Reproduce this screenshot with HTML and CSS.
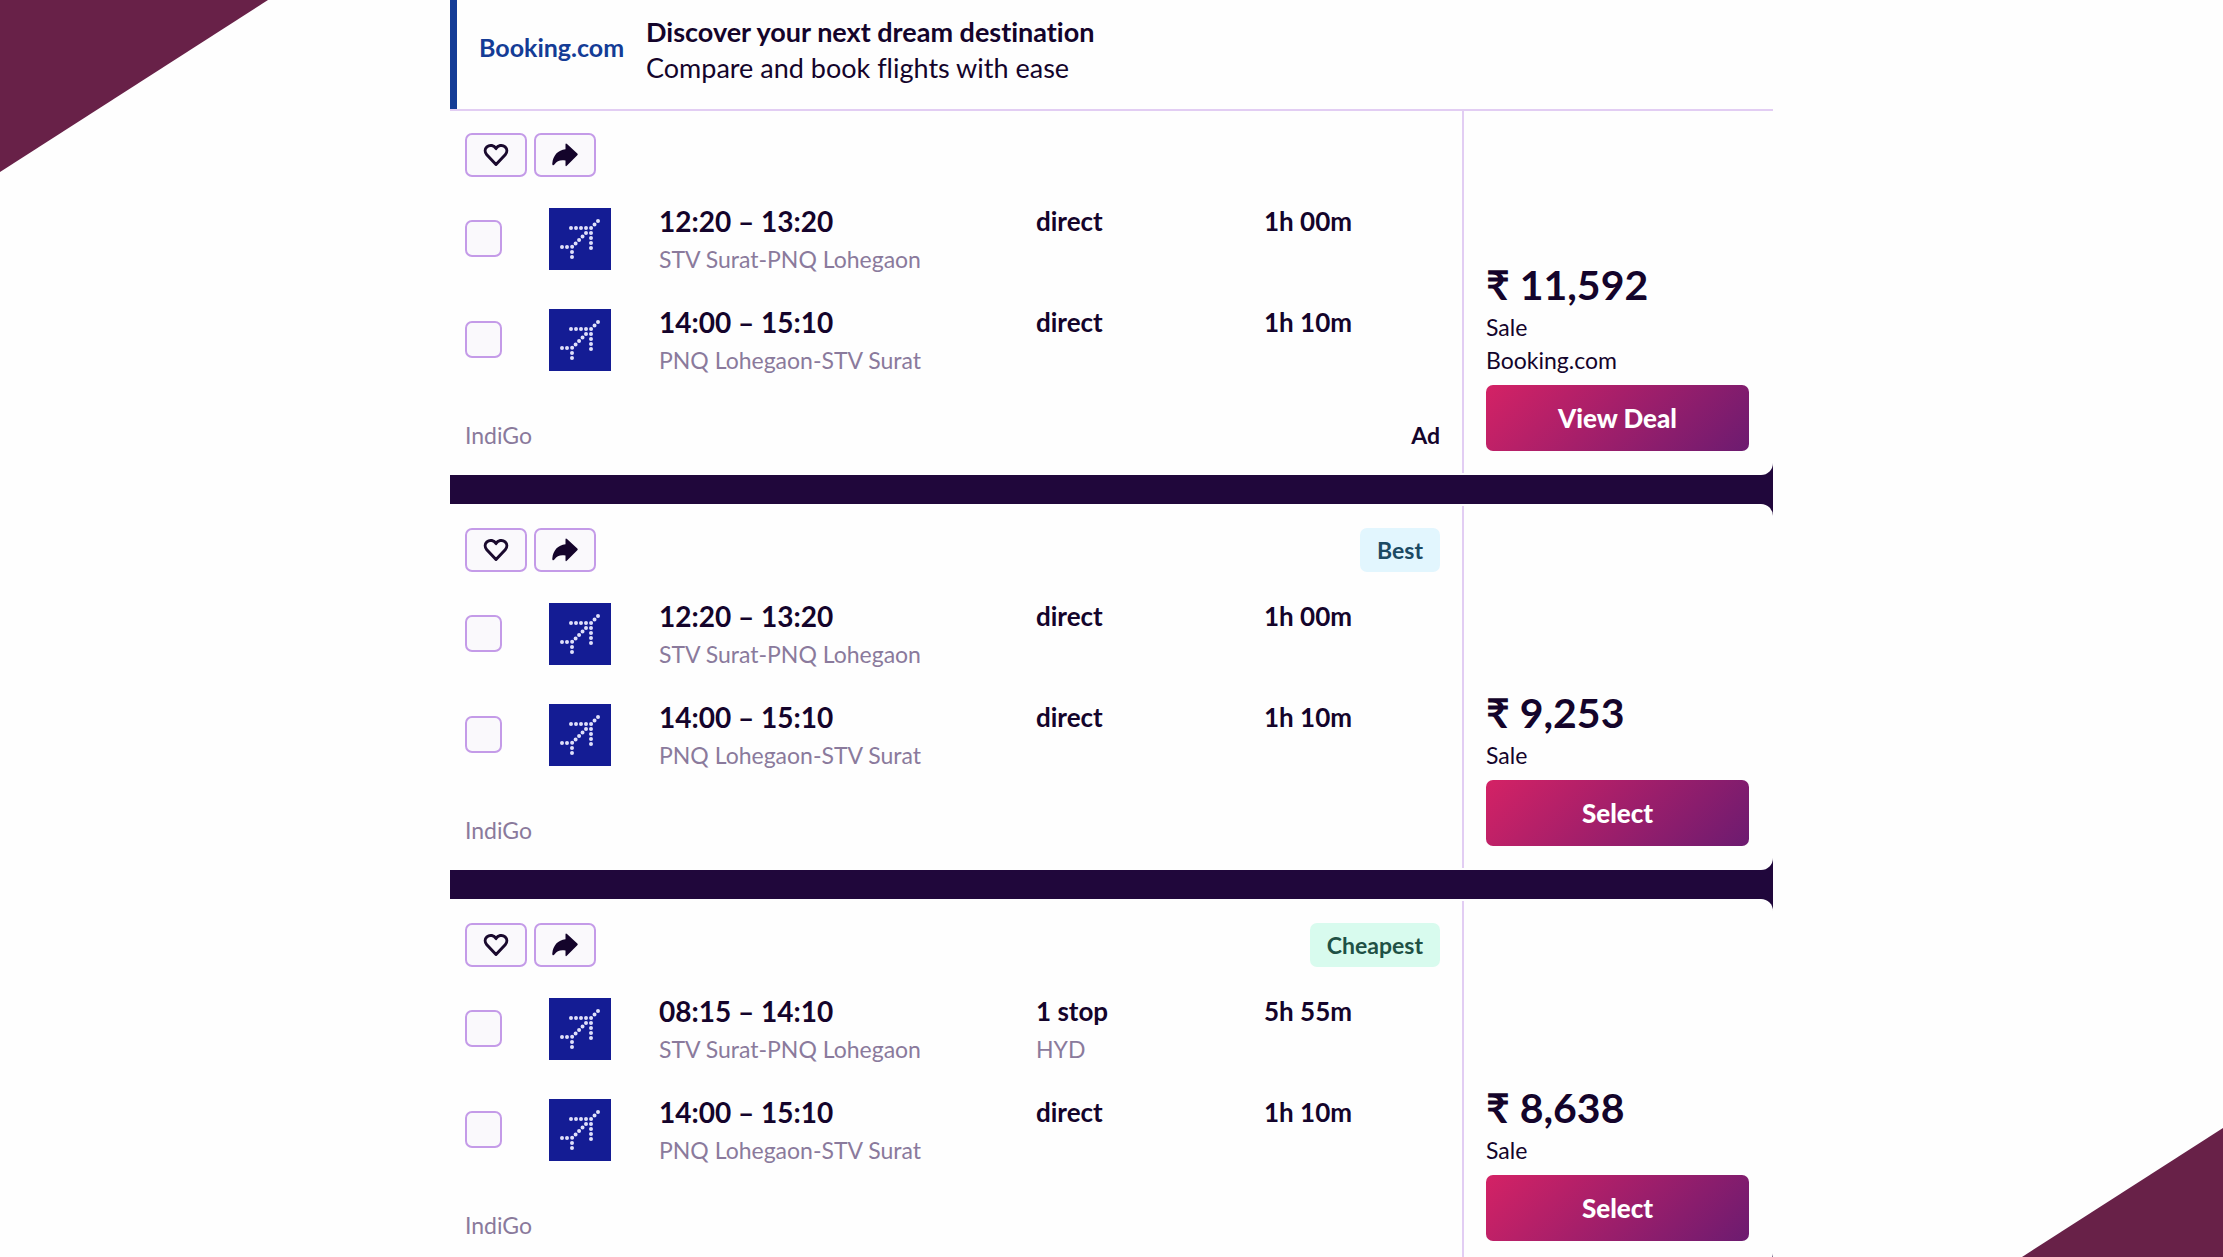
FILE: index.html
```html
<!DOCTYPE html>
<html lang="en">
<head>
    <meta charset="UTF-8">
    <meta name="viewport" content="width=device-width, initial-scale=1.0">
    <title>Flight Results</title>
    <link rel="stylesheet" href="styles.css">
</head>
<body>

    <!-- Shared icons -->
    <svg class="icon-defs" aria-hidden="true">
        <symbol id="icon-heart" viewBox="0 0 26 24">
            <path d="M13 21.5 3.8 11.8C1.6 9.2 1.7 5.8 3.9 3.8 6.8 1.4 11 2.2 13 5.6 15 2.2 19.2 1.4 22.1 3.8 24.3 5.8 24.4 9.200 22.2 11.800Z" fill="none" stroke="#1a0a2e" stroke-width="3" stroke-linejoin="round"></path>
        </symbol>
        <symbol id="icon-share" viewBox="0 0 26 24">
            <path d="M13.500 1.500Q13.500 0 15 1L25.300 10.400Q26.200 11.300 25.300 12.200L15 22.600Q13.500 24 13.500 22V17.500C8.500 16.500 5 17.800 2.600 21.200 1.600 22.800 0.200 22.500 0.300 20.500 1 12.500 6 7 13.500 6.300Z" fill="#14042b"></path>
        </symbol>
        <symbol id="logo-indigo" viewBox="0 0 62 62">
            <rect width="62" height="62" fill="#141c94"></rect>
            <g fill="none" stroke="#dfe0fa" stroke-width="4" stroke-linecap="round">
                <path d="M22 20H42" stroke-dasharray="0 5"></path>
                <path d="M42 25V41" stroke-dasharray="0 5"></path>
                <path d="M49 13 42 20" stroke-dasharray="0 4.9"></path>
                <path d="M37 25 23 39" stroke-dasharray="0 4.9"></path>
                <path d="M13 39H23" stroke-dasharray="0 5"></path>
                <path d="M23 44V50" stroke-dasharray="0 5"></path>
            </g>
        </symbol>
    </svg>

    <div class="page">
        <div class="corner corner-top"></div>
        <div class="corner corner-bottom"></div>

        <main class="results">
            <header class="banner">
                <span class="banner-logo">Booking.com</span>
                <div class="banner-text">
                    <strong>Discover your next dream destination</strong>
                    <span>Compare and book flights with ease</span>
                </div>
            </header>

            <article class="card card-sponsored">
                <div class="card-main">
                    <div class="card-top">
                        <button class="icon-button" aria-label="Save"><svg><use href="#icon-heart"></use></svg></button>
                        <button class="icon-button" aria-label="Share"><svg><use href="#icon-share"></use></svg></button>
                    </div>
                    <div class="leg">
                        <input type="checkbox" class="leg-check" aria-label="12:20 – 13:20">
                        <svg class="leg-logo"><use href="#logo-indigo"></use></svg>
                        <div class="leg-info"><div class="time">12:20 – 13:20</div><div class="sub">STV Surat-PNQ Lohegaon</div></div>
                        <div class="leg-info"><div class="detail">direct</div></div>
                        <div class="leg-info"><div class="detail">1h 00m</div></div>
                    </div>
                    <div class="leg">
                        <input type="checkbox" class="leg-check" aria-label="14:00 – 15:10">
                        <svg class="leg-logo"><use href="#logo-indigo"></use></svg>
                        <div class="leg-info"><div class="time">14:00 – 15:10</div><div class="sub">PNQ Lohegaon-STV Surat</div></div>
                        <div class="leg-info"><div class="detail">direct</div></div>
                        <div class="leg-info"><div class="detail">1h 10m</div></div>
                    </div>
                    <div class="card-bottom">
                        <span class="sub">IndiGo</span>
                        <span class="ad">Ad</span>
                    </div>
                </div>
                <div class="card-price">
                    <div class="price">₹ 11,592</div>
                    <div class="fare">Sale</div>
                    <div class="fare">Booking.com</div>
                    <button class="deal-button">View Deal</button>
                </div>
            </article>

            <article class="card">
                <div class="card-main">
                    <div class="card-top">
                        <button class="icon-button" aria-label="Save"><svg><use href="#icon-heart"></use></svg></button>
                        <button class="icon-button" aria-label="Share"><svg><use href="#icon-share"></use></svg></button>
                        <span class="tag tag-best">Best</span>
                    </div>
                    <div class="leg">
                        <input type="checkbox" class="leg-check" aria-label="12:20 – 13:20">
                        <svg class="leg-logo"><use href="#logo-indigo"></use></svg>
                        <div class="leg-info"><div class="time">12:20 – 13:20</div><div class="sub">STV Surat-PNQ Lohegaon</div></div>
                        <div class="leg-info"><div class="detail">direct</div></div>
                        <div class="leg-info"><div class="detail">1h 00m</div></div>
                    </div>
                    <div class="leg">
                        <input type="checkbox" class="leg-check" aria-label="14:00 – 15:10">
                        <svg class="leg-logo"><use href="#logo-indigo"></use></svg>
                        <div class="leg-info"><div class="time">14:00 – 15:10</div><div class="sub">PNQ Lohegaon-STV Surat</div></div>
                        <div class="leg-info"><div class="detail">direct</div></div>
                        <div class="leg-info"><div class="detail">1h 10m</div></div>
                    </div>
                    <div class="card-bottom">
                        <span class="sub">IndiGo</span>
                    </div>
                </div>
                <div class="card-price">
                    <div class="price">₹ 9,253</div>
                    <div class="fare">Sale</div>
                    <button class="deal-button">Select</button>
                </div>
            </article>

            <article class="card">
                <div class="card-main">
                    <div class="card-top">
                        <button class="icon-button" aria-label="Save"><svg><use href="#icon-heart"></use></svg></button>
                        <button class="icon-button" aria-label="Share"><svg><use href="#icon-share"></use></svg></button>
                        <span class="tag tag-cheapest">Cheapest</span>
                    </div>
                    <div class="leg">
                        <input type="checkbox" class="leg-check" aria-label="08:15 – 14:10">
                        <svg class="leg-logo"><use href="#logo-indigo"></use></svg>
                        <div class="leg-info"><div class="time">08:15 – 14:10</div><div class="sub">STV Surat-PNQ Lohegaon</div></div>
                        <div class="leg-info"><div class="detail">1 stop</div><div class="sub">HYD</div></div>
                        <div class="leg-info"><div class="detail">5h 55m</div></div>
                    </div>
                    <div class="leg">
                        <input type="checkbox" class="leg-check" aria-label="14:00 – 15:10">
                        <svg class="leg-logo"><use href="#logo-indigo"></use></svg>
                        <div class="leg-info"><div class="time">14:00 – 15:10</div><div class="sub">PNQ Lohegaon-STV Surat</div></div>
                        <div class="leg-info"><div class="detail">direct</div></div>
                        <div class="leg-info"><div class="detail">1h 10m</div></div>
                    </div>
                    <div class="card-bottom">
                        <span class="sub">IndiGo</span>
                    </div>
                </div>
                <div class="card-price">
                    <div class="price">₹ 8,638</div>
                    <div class="fare">Sale</div>
                    <button class="deal-button">Select</button>
                </div>
            </article>
        </main>
    </div>

</body>
</html>
```

FILE: styles.css
```css
* {
    box-sizing: border-box;
}

body {
    margin: 0;
    font-family: Lato, "Noto Sans", sans-serif;
    font-variant-ligatures: none;
    background-color: #fefefe;
    color: #14042b;
}

.icon-defs {
    display: none;
}

.page {
    position: relative;
    height: 100vh;
    overflow: hidden;
}

/* Page corners */
.corner {
    position: absolute;
    background-color: #682148;
}

.corner-top {
    top: 0;
    left: 0;
    width: 268px;
    height: 172px;
    clip-path: polygon(0 0, 100% 0, 0 100%);
}

.corner-bottom {
    right: 0;
    bottom: 0;
    width: 201px;
    height: 129px;
    clip-path: polygon(100% 0, 100% 100%, 0 100%);
}

.results {
    max-width: 1323px;
    margin: 0 auto;
    background-color: #20073b;
}

/* Sponsor banner */
.banner {
    height: 111px;
    display: flex;
    align-items: flex-start;
    gap: 22px;
    padding: 14px 22px;
    background-color: #fefefe;
    border-left: 7px solid #143c96;
}

.banner-logo {
    width: 145px;
    font-size: 25px;
    line-height: 66px;
    font-weight: bold;
    color: #143c96;
}

.banner-text {
    display: flex;
    flex-direction: column;
    font-size: 27px;
    line-height: 36px;
}

/* Result cards */
.card {
    display: flex;
    padding: 2px 0;
    background-color: #fefefe;
    border-radius: 0 12px 12px 0;
}

.card + .card {
    margin-top: 29px;
}

.card-sponsored {
    margin-top: -2px;
    padding-top: 0;
    border-top: 2px solid #e2cdf3;
    border-radius: 0 0 12px 0;
}

.card-main {
    flex: 1;
    height: 362px;
    padding: 22px 22px 0 15px;
}

.card-top {
    display: flex;
    gap: 7px;
    height: 44px;
}

.icon-button {
    width: 62px;
    height: 44px;
    display: flex;
    align-items: center;
    justify-content: center;
    padding: 0;
    background-color: #faf9fc;
    border: 2px solid #c49be8;
    border-radius: 7px;
    cursor: pointer;
}

.icon-button svg {
    width: 26px;
    height: 24px;
}

.tag {
    margin-left: auto;
    padding: 0 17px;
    border-radius: 7px;
    font-size: 23px;
    line-height: 44px;
    font-weight: bold;
}

.tag-best {
    background-color: #e2f6fe;
    color: #1b4a63;
}

.tag-cheapest {
    background-color: #d8fbee;
    color: #1f5145;
}

.leg {
    display: grid;
    grid-template-columns: 84px 110px 377px 228px 1fr;
    align-items: start;
    margin-top: 31px;
    height: 70px;
}

.leg-check {
    appearance: none;
    width: 37px;
    height: 37px;
    margin: 12px 0 0;
    background-color: #faf9fc;
    border: 2px solid #c49be8;
    border-radius: 7px;
}

.leg-logo {
    width: 62px;
    height: 62px;
}

.time,
.detail {
    margin-bottom: 5px;
    line-height: 27px;
    font-weight: bold;
}

.time {
    font-size: 28px;
}

.detail {
    font-size: 26px;
}

.sub {
    font-size: 23px;
    line-height: 38px;
    color: #8a7a9c;
}

.card-bottom {
    display: flex;
    justify-content: space-between;
    margin-top: 37px;
}

.ad {
    font-size: 23px;
    line-height: 38px;
    font-weight: bold;
}

.card-price {
    width: 311px;
    display: flex;
    flex-direction: column;
    justify-content: flex-end;
    padding: 0 24px 22px 22px;
    border-left: 2px solid #e2cdf3;
}

.price {
    margin-bottom: 4px;
    font-size: 41px;
    line-height: 44px;
    font-weight: bold;
}

.fare {
    font-size: 23px;
    line-height: 33px;
}

.deal-button {
    height: 66px;
    margin-top: 8px;
    background: linear-gradient(135deg, #d42265, #6c1b70);
    border: none;
    border-radius: 7px;
    color: #fff;
    font-family: inherit;
    font-size: 26px;
    font-weight: 900;
    cursor: pointer;
}
```
